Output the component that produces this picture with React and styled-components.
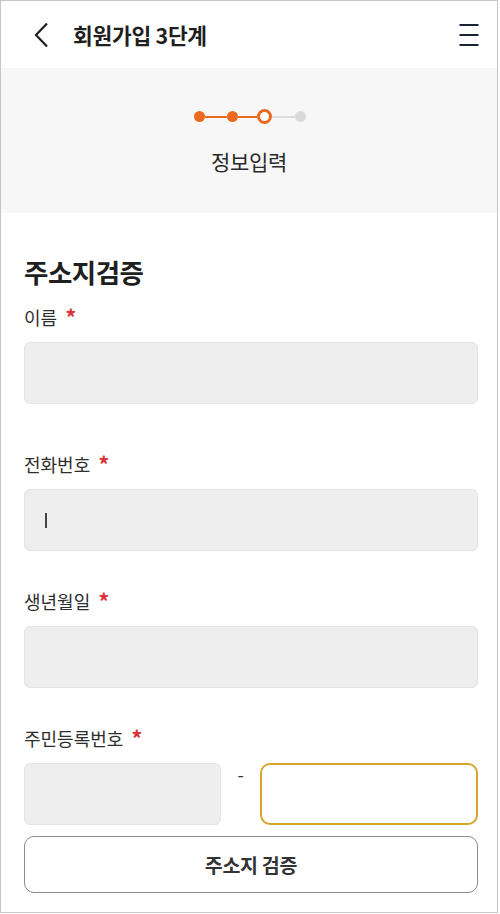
import React from "react";
import styled, { createGlobalStyle } from "styled-components";

const GlobalStyle = createGlobalStyle`
  body {
    margin: 0;
    background: #ffffff;
    font-family: "Noto Sans CJK KR", "Noto Sans", sans-serif;
    color: #222222;
  }
`;

const STEPS = ["done", "done", "current", "todo"];
const LINE_WIDTHS = [0, 22, 19, 23];

const FIELDS = [
  { id: "name", label: "이름", gapBefore: 15 },
  { id: "phone", label: "전화번호", gapBefore: 48, caret: true },
  { id: "birth", label: "생년월일", gapBefore: 38 },
];

const Frame = styled.div`
  width: 498px;
  height: 913px;
  border: 1px solid #c6c6c6;
  box-sizing: border-box;
  display: flex;
  flex-direction: column;
  overflow: hidden;
  background: #ffffff;
`;

const Header = styled.header`
  height: 67px;
  display: flex;
  align-items: center;
  padding: 0 18px 0 31px;
  box-sizing: border-box;
`;

const IconButton = styled.button`
  background: none;
  border: none;
  padding: 0;
  display: flex;
  align-items: center;
  justify-content: center;
  cursor: pointer;
`;

const Title = styled.h1`
  flex: 1;
  margin: 0 0 0 17px;
  font-size: 21.5px;
  font-weight: 700;
  color: #1f1f1f;
  letter-spacing: -0.3px;
`;

const StepPanel = styled.section`
  height: 145px;
  background: #f7f7f7;
  display: flex;
  flex-direction: column;
  align-items: center;
  padding-top: 41px;
  box-sizing: border-box;
`;

const StepTrack = styled.div`
  display: flex;
  align-items: center;
  margin-left: 2px;
`;

const StepLine = styled.div`
  width: ${({ $w }) => $w}px;
  height: 2px;
  background: ${({ $active }) => ($active ? "#ec6a1f" : "#dcdcdc")};
`;

const StepDot = styled.div`
  box-sizing: border-box;
  width: ${({ $state }) => ($state === "current" ? 15 : 11)}px;
  height: ${({ $state }) => ($state === "current" ? 15 : 11)}px;
  border-radius: 50%;
  background: ${({ $state }) =>
    $state === "done" ? "#ec6a1f" : $state === "current" ? "#ffffff" : "#dadada"};
  border: ${({ $state }) => ($state === "current" ? "3px solid #ec6a1f" : "none")};
`;

const StepLabel = styled.div`
  margin-top: 22px;
  font-size: 21px;
  color: #2a2a2a;
  letter-spacing: -0.3px;
`;

const Form = styled.section`
  padding: 41px 19px 0 23px;
  display: flex;
  flex-direction: column;
`;

const Heading = styled.h2`
  margin: 0;
  font-size: 26.5px;
  line-height: 36px;
  font-weight: 700;
  color: #1f1f1f;
  letter-spacing: -0.5px;
`;

const FieldGroup = styled.div`
  margin-top: ${({ $gap }) => $gap}px;
  display: flex;
  flex-direction: column;
  gap: 13px;
`;

const Label = styled.label`
  font-size: 18px;
  line-height: 24px;
  height: 24px;
  color: #2e2e2e;
  display: flex;
  align-items: center;
  gap: 8px;
`;

const Required = styled.span`
  color: #d8343a;
  font-weight: 700;
  font-size: 22px;
  line-height: 24px;
  position: relative;
  top: -1px;
`;

const Field = styled.div`
  height: 62px;
  box-sizing: border-box;
  flex: ${({ $grow }) => ($grow ? 1 : "none")};
  width: ${({ $w }) => ($w ? `${$w}px` : "auto")};
  background: ${({ $focused }) => ($focused ? "#ffffff" : "#eeeeee")};
  border: ${({ $focused }) => ($focused ? "2px solid #d8a52c" : "1px solid #e3e3e3")};
  border-radius: ${({ $focused }) => ($focused ? "10px" : "6px")};
  display: flex;
  align-items: center;
  padding-left: 20px;
`;

const Caret = styled.span`
  width: 1.5px;
  height: 15px;
  background: #444444;
`;

const SplitRow = styled.div`
  display: flex;
  align-items: flex-start;
`;

const Dash = styled.span`
  width: 39px;
  text-align: center;
  font-size: 18px;
  line-height: 18px;
  padding-top: 2px;
  color: #333333;
`;

const SubmitButton = styled.button`
  margin-top: 11px;
  height: 57px;
  width: 100%;
  background: #ffffff;
  border: 1px solid #8c8c8c;
  border-radius: 10px;
  font-family: inherit;
  font-size: 19.5px;
  font-weight: 700;
  color: #333333;
  letter-spacing: -0.3px;
  cursor: pointer;
`;

function Stepper() {
  return (
    <StepTrack>
      {STEPS.map((state, i) => (
        <React.Fragment key={i}>
          {i > 0 && <StepLine $w={LINE_WIDTHS[i]} $active={state !== "todo"} />}
          <StepDot $state={state} />
        </React.Fragment>
      ))}
    </StepTrack>
  );
}

export default function App() {
  return (
    <>
      <GlobalStyle />
      <Frame>
        <Header>
          <IconButton aria-label="뒤로">
            <svg width="24" height="26" viewBox="0 0 24 26">
              <path d="M15 1.5 L4 13 L15 24.5" fill="none" stroke="#1f1f1f" strokeWidth="2.2" />
            </svg>
          </IconButton>
          <Title>회원가입 3단계</Title>
          <IconButton aria-label="메뉴">
            <svg width="20" height="24" viewBox="0 0 20 24">
              <path d="M0.5 2 H19.5 M0.5 12 H19.5 M0.5 22 H19.5" stroke="#1b2336" strokeWidth="2" />
            </svg>
          </IconButton>
        </Header>

        <StepPanel>
          <Stepper />
          <StepLabel>정보입력</StepLabel>
        </StepPanel>

        <Form>
          <Heading>주소지검증</Heading>
          {FIELDS.map(f => (
            <FieldGroup key={f.id} $gap={f.gapBefore}>
              <Label>
                {f.label}
                <Required>*</Required>
              </Label>
              <Field>{f.caret && <Caret />}</Field>
            </FieldGroup>
          ))}
          <FieldGroup $gap={38}>
            <Label>
              주민등록번호
              <Required>*</Required>
            </Label>
            <SplitRow>
              <Field $w={197} />
              <Dash>-</Dash>
              <Field $grow $focused />
            </SplitRow>
          </FieldGroup>
          <SubmitButton>주소지 검증</SubmitButton>
        </Form>
      </Frame>
    </>
  );
}
